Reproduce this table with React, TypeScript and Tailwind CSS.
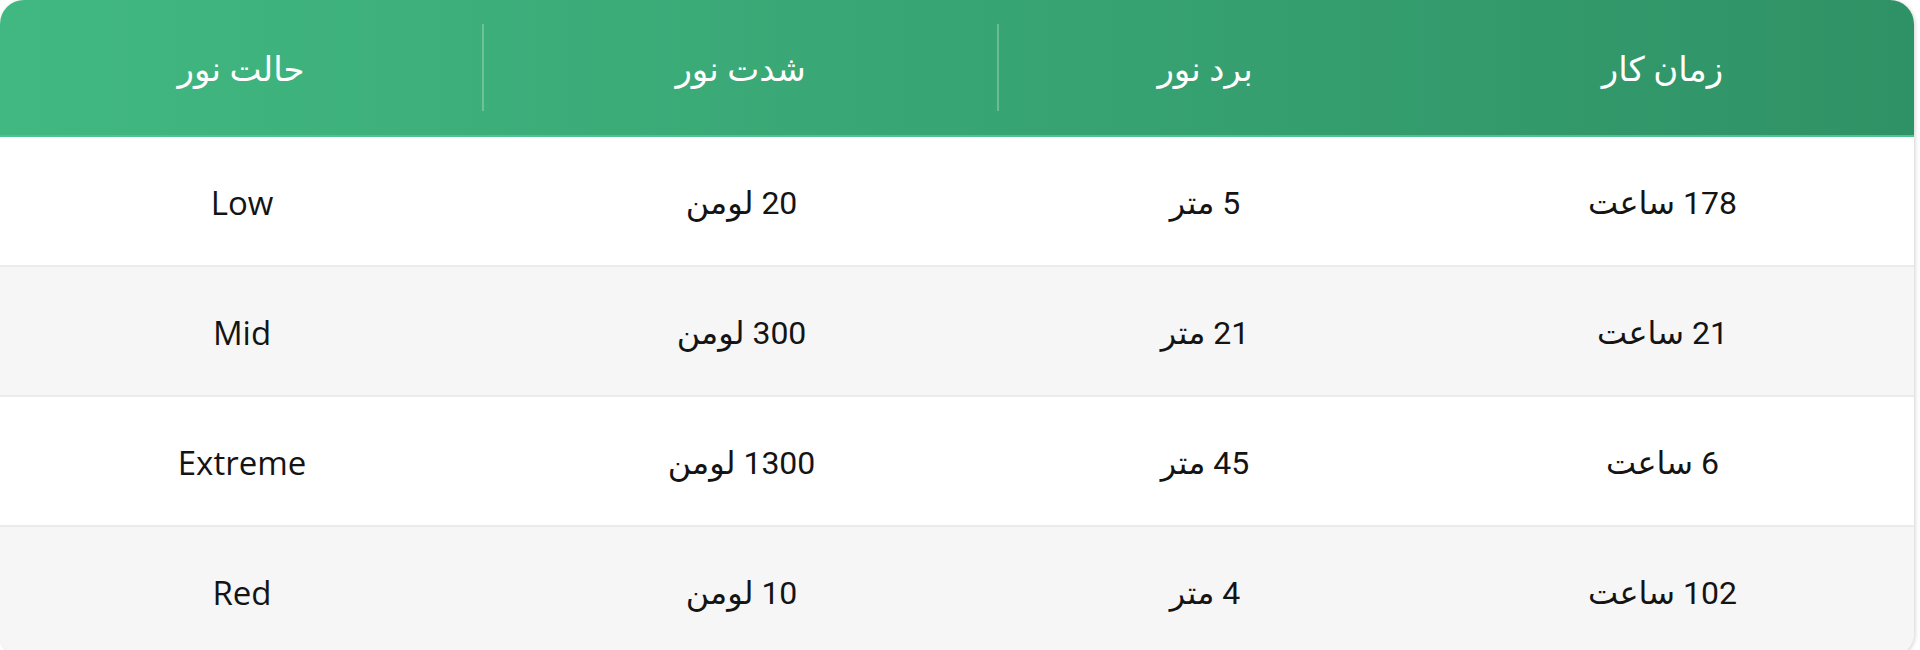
const headers = ['زمان کار', 'برد نور', 'شدت نور', 'حالت نور'];

const rows = [
  ['178 ساعت', '5 متر', '20 لومن', 'Low'],
  ['21 ساعت', '21 متر', '300 لومن', 'Mid'],
  ['6 ساعت', '45 متر', '1300 لومن', 'Extreme'],
  ['102 ساعت', '4 متر', '10 لومن', 'Red'],
];

export default function App() {
  return (
    <div className="bg-white h-[650px] overflow-hidden">
      <div
        dir="rtl"
        className="w-[1914px] rounded-[24px] overflow-hidden bg-white shadow-[1px_1px_4px_rgba(0,0,0,0.18)]"
      >
        {/* header */}
        <div className="grid grid-cols-[503px_412px_515px_484px] bg-linear-to-l from-[#2f9266] via-[#38a574] to-[#41b881] border-b-2 border-[#4fc38f]">
          {headers.map((h, i) => (
            <div key={h} className="h-[135px] py-6">
              <div
                className={
                  'h-full flex items-center justify-center pt-1 text-white text-[34px] font-["Roboto","DejaVu_Sans",sans-serif] ' +
                  (i >= 2 ? 'border-r-2 border-white/25' : '')
                }
              >
                {h}
              </div>
            </div>
          ))}
        </div>

        {/* body */}
        {rows.map((r, ri) => (
          <div
            key={ri}
            className={
              'grid grid-cols-[503px_412px_515px_484px] h-[130px] border-b-2 border-[#ebebeb] ' +
              (ri % 2 === 1 ? 'bg-[#f6f6f6]' : 'bg-white')
            }
          >
            {r.map((c, ci) => (
              <div
                key={ci}
                className={
                  'flex items-center justify-center pt-1 text-[#141414] ' +
                  (ci === 3
                    ? 'text-[33px] font-["Open_Sans",sans-serif]'
                    : 'text-[32px] font-["Roboto","DejaVu_Sans",sans-serif]')
                }
              >
                {c}
              </div>
            ))}
          </div>
        ))}
      </div>
    </div>
  );
}
